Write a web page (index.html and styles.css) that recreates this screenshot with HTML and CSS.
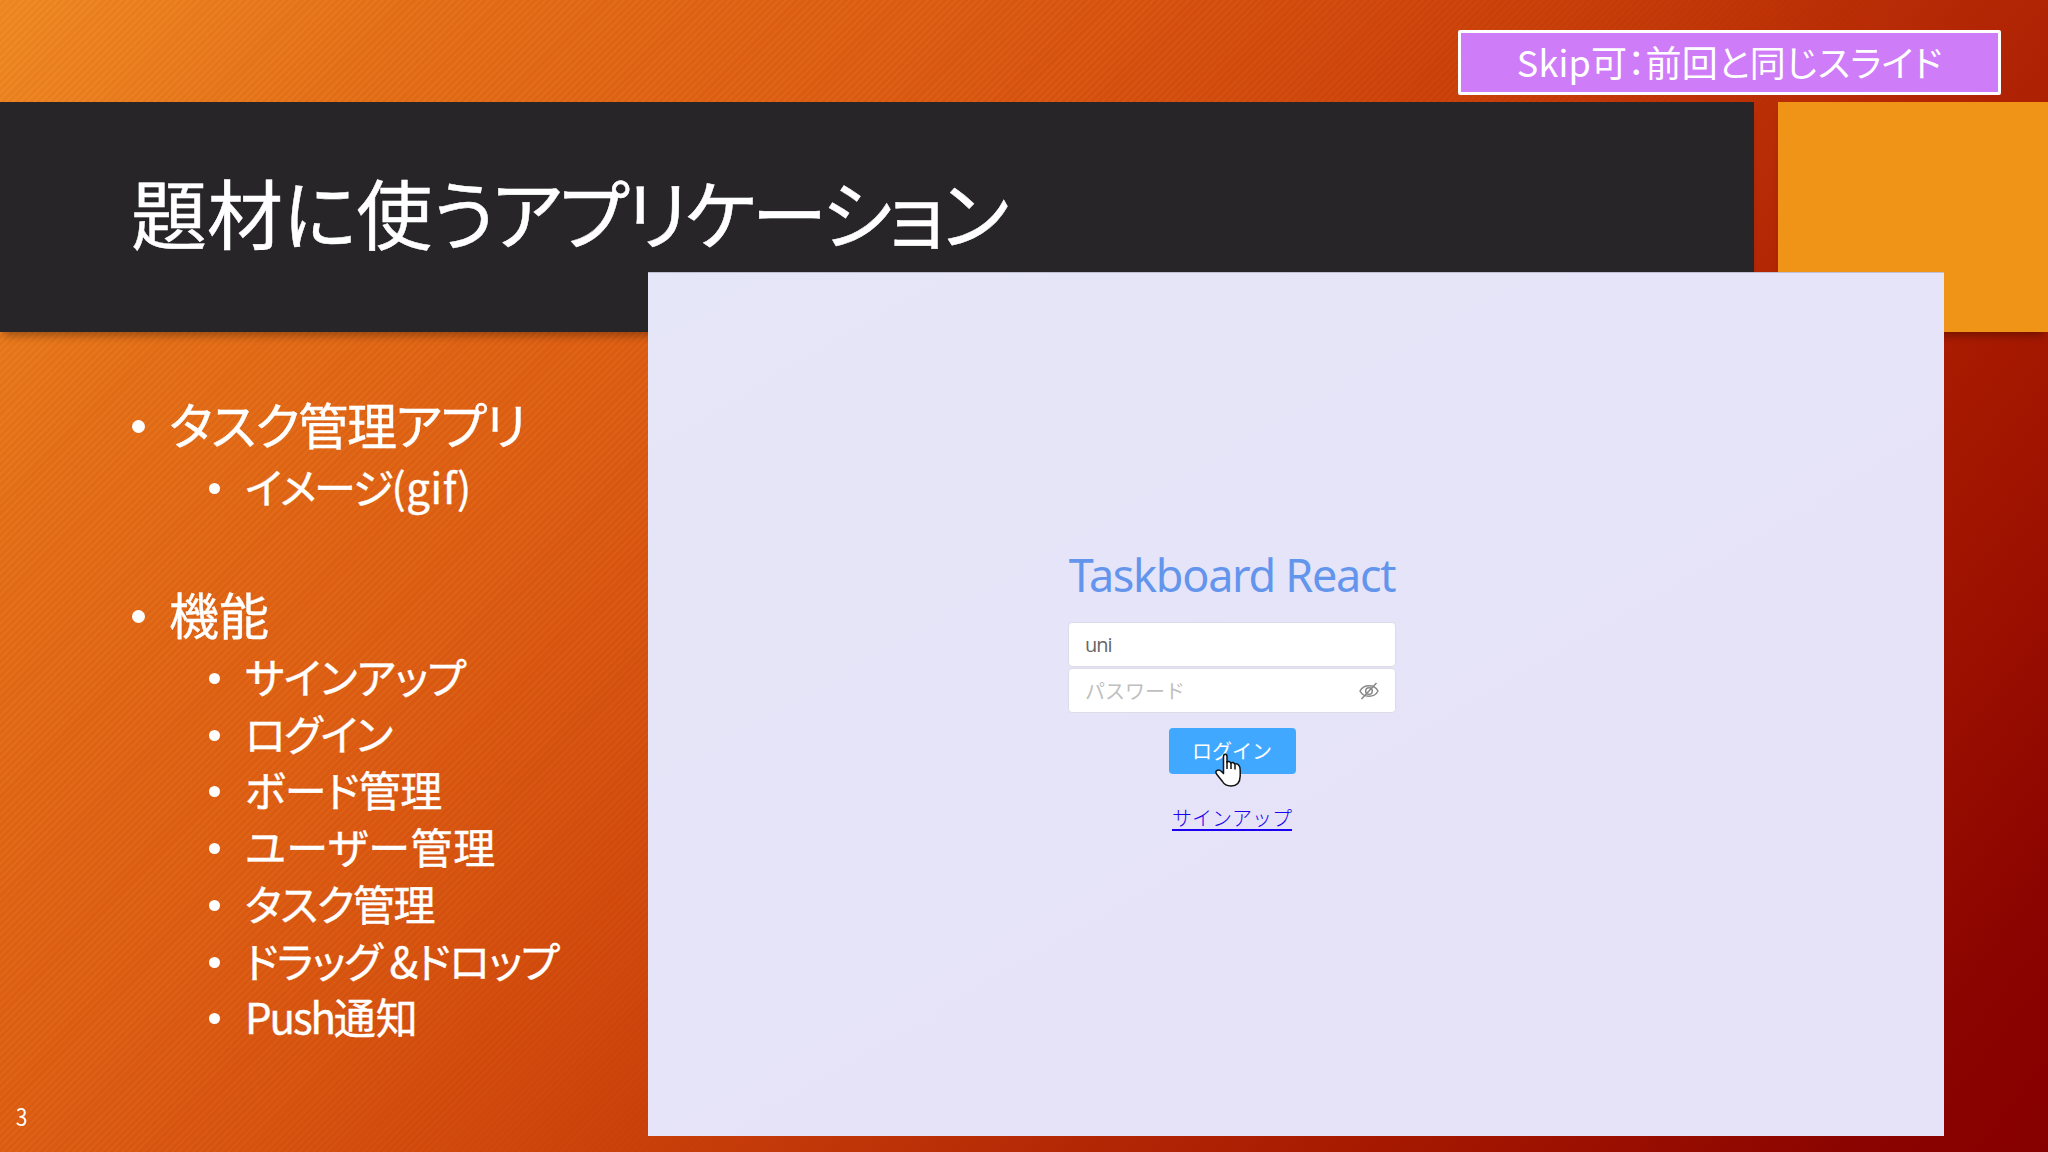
FILE: index.html
```
<!DOCTYPE html>
<html lang="ja">
<head>
  <meta charset="UTF-8" />
  <meta name="viewport" content="width=device-width, initial-scale=1.0"/>
  <title>題材に使うアプリケーション</title>
  <link rel="stylesheet" href="styles.css">
</head>
<body>
  <div class="slide">
    <div class="top">
      <div class="skip-label">Skip可：前回と同じスライド</div>
    </div>

    <header class="title-row">
      <div class="title-bar">
        <h1>題材に使<span class="kana">うアプリケーション</span></h1>
      </div>
      <div class="title-accent"></div>
    </header>

    <main class="content">
      <ul class="outline">
        <li><span class="t-app">タスク管理アプリ</span>
          <ul>
            <li><span class="t-image">イメージ</span><span class="t-gif">(gif)</span></li>
          </ul>
        </li>
        <li class="features"><span>機能</span>
          <ul>
            <li><span class="t-signup">サインアップ</span></li>
            <li><span class="t-login">ログイン</span></li>
            <li><span class="t-board">ボード管理</span></li>
            <li><span class="t-user">ユーザー管理</span></li>
            <li><span class="t-task">タスク管理</span></li>
            <li><span class="t-drag">ドラッグ &amp;ドロップ</span></li>
            <li><span class="t-push">Push</span>通知</li>
          </ul>
        </li>
      </ul>

      <section class="demo">
        <form class="login">
          <h2>Taskboard React</h2>
          <div class="field"><span class="value">uni</span></div>
          <div class="field">
            <span class="placeholder">パスワード</span>
            <svg class="eye" viewBox="0 0 20 18" fill="none" stroke="#888" stroke-width="1.5">
              <path d="M1 9C4.5 2 15.500 2 19 9C15.500 16 4.500 16 1 9Z"/>
              <circle cx="10" cy="9" r="3.300"/>
              <path d="M2.500 17L17.500 1"/>
            </svg>
          </div>
          <div class="login-button">
            <span>ログイン</span>
            <svg class="cursor" viewBox="0 0 26 34">
              <path d="M8.500 3.500Q8.500 1.200 10.200 1.200Q12 1.200 12 3.500V9Q14.500 7.500 15.700 10Q18.500 8.500 19.700 11.200Q22 10 24 12.500Q25.300 14 25.200 18V23Q25 33 16 33Q10 33 7.500 28.500L1.500 21Q0 18 2.500 17.200Q4.500 16.500 6.500 18.500L8.500 20.500Z" fill="#fff" stroke="#111" stroke-width="1.500" stroke-linejoin="round"/>
              <path d="M12 8V16M16 10V16M20 11.500V16.500" stroke="#111" stroke-width="1.500" fill="none"/>
            </svg>
          </div>
          <a class="signup" href="#">サインアップ</a>
        </form>
      </section>
    </main>

    <footer class="page-number">3</footer>
  </div>
</body>
</html>
```
FILE: styles.css
```
* {
  box-sizing: border-box;
}

body {
  margin: 0;
  font-family: "Noto Sans CJK JP", "Noto Sans", sans-serif;
  font-feature-settings: "palt";
  color: #fff;
}

.slide {
  display: flex;
  flex-direction: column;
  position: relative;
  z-index: 0;
  width: 2048px;
  height: 1152px;
  overflow: hidden;
  background: linear-gradient(128deg, #f08a24 0%, #e57018 14%, #dc5b12 33%, #cf460c 48%, #c63c09 55%, #b42705 67%, #a51800 78%, #8c0400 93%, #860000 100%);
}

/* hatching, fades out to the right */
.slide::before {
  content: "";
  position: absolute;
  inset: 0;
  z-index: -1;
  background: repeating-linear-gradient(135deg, rgba(255, 190, 90, 0.05) 0 2px, rgba(120, 20, 0, 0.03) 2px 5px);
  -webkit-mask-image: linear-gradient(135deg, #000 35%, transparent 60%);
  mask-image: linear-gradient(135deg, #000 35%, transparent 60%);
}

.top {
  display: flex;
  justify-content: flex-end;
  height: 102px;
  padding: 30px 47px 0 0;
}

.skip-label {
  width: 543px;
  height: 65px;
  border: 3px solid #fff;
  border-radius: 2px;
  background: #cf7cf8;
  font-size: 36px;
  line-height: 56px;
  letter-spacing: 0.2px;
  text-align: center;
  white-space: nowrap;
}

.title-row {
  display: flex;
  gap: 24px;
  height: 230px;
}

.title-bar {
  width: 1754px;
  padding-left: 131px;
  background: #272528;
  box-shadow: 0 8px 8px -4px rgba(0, 0, 0, 0.3);
}

h1 {
  margin: 0;
  font-size: 76px;
  font-weight: 400;
  line-height: 218px;
  white-space: nowrap;
  -webkit-text-stroke: 0.5px #fff;
}

.kana {
  letter-spacing: -3.5px;
}

.title-accent {
  flex: 1;
  background: #ef9416;
  box-shadow: 0 8px 8px -4px rgba(0, 0, 0, 0.3);
}

.content {
  display: grid;
  grid-template-columns: 648px 1296px;
}

ul {
  margin: 0;
  padding: 0;
  list-style: none;
}

li {
  white-space: nowrap;
}

li::before {
  content: "";
  display: inline-block;
  border-radius: 50%;
  background: #fff;
}

.outline {
  padding: 58px 0 0 132px;
  -webkit-text-stroke: 0.4px #fff;
}

.outline > li {
  font-size: 50px;
  line-height: 66px;
}

.outline > li::before {
  width: 13px;
  height: 13px;
  margin-right: 24px;
  vertical-align: 12px;
}

.outline > .features {
  margin-top: 65px;
}

.outline ul {
  padding: 2px 0 0 77px;
}

.outline ul li {
  font-size: 42px;
  line-height: 56.75px;
}

.outline ul li::before {
  width: 11px;
  height: 11px;
  margin-right: 25px;
  vertical-align: 10px;
}

.t-app,
.t-task {
  letter-spacing: -1.4px;
}

.t-image {
  letter-spacing: -2.2px;
}

.t-gif {
  letter-spacing: 0.6px;
}

.t-signup {
  letter-spacing: -0.7px;
}

.t-login {
  letter-spacing: -1.7px;
}

.t-board {
  letter-spacing: -0.5px;
}

.t-user {
  letter-spacing: 0.6px;
}

.t-drag {
  letter-spacing: -1.1px;
}

.t-push {
  letter-spacing: -2.1px;
}

.demo {
  position: relative;
  height: 864px;
  margin-top: -60px;
  padding: 272px 128px 0 0;
  background: linear-gradient(150deg, #e5e6f7, #e6e3f9 60%, #e6e3f9);
  border-top: 1px solid #bfbfd2;
}

.login {
  display: flex;
  flex-direction: column;
  align-items: center;
  font-size: 20px;
}

h2 {
  margin: 0 0 17px;
  color: #6495ed;
  font-family: "Noto Sans", "Open Sans", sans-serif;
  font-size: 45px;
  font-weight: 400;
  line-height: 60px;
  letter-spacing: -1.3px;
  white-space: nowrap;
}

.field {
  display: flex;
  align-items: center;
  justify-content: space-between;
  width: 328px;
  height: 45px;
  margin-bottom: 1px;
  padding: 0 16px;
  border: 1px solid #dcdbe6;
  border-radius: 4px;
  background: #fff;
}

.value {
  color: #666;
  font-family: "Open Sans", "Noto Sans", sans-serif;
  font-size: 20px;
  letter-spacing: -1px;
}

.placeholder {
  color: #bfbfbf;
  font-feature-settings: normal;
}

.eye {
  width: 20px;
  height: 18px;
}

.login-button {
  position: relative;
  width: 127px;
  height: 46px;
  margin-top: 14px;
  border-radius: 4px;
  background: #40a9ff;
  font-feature-settings: normal;
  line-height: 45px;
  text-align: center;
}

.cursor {
  position: absolute;
  left: 46px;
  top: 25px;
  width: 26px;
  height: 34px;
}

.signup {
  margin-top: 29px;
  color: #1a00ee;
  font-weight: 300;
  font-feature-settings: normal;
  line-height: 30px;
  text-underline-offset: 3px;
}

.page-number {
  position: absolute;
  left: 15px;
  top: 1099px;
  font-size: 24px;
  line-height: 34px;
  transform: scaleX(0.88);
}
```
